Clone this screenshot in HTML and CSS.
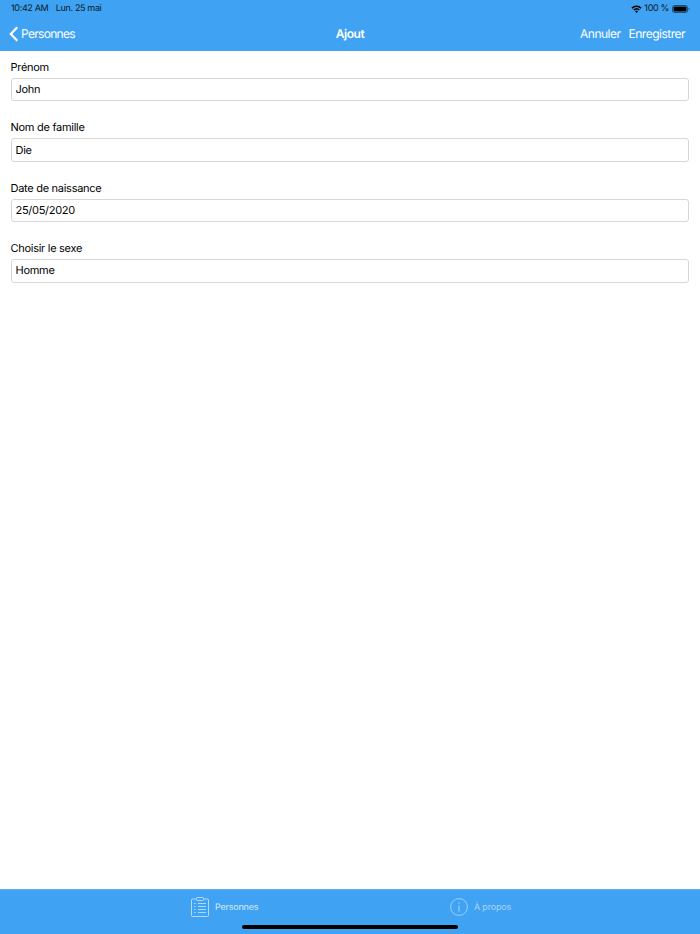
FILE: index.html
```html
<!DOCTYPE html>
<html lang="fr">
<head>
    <meta charset="UTF-8">
    <meta name="viewport" content="width=device-width, initial-scale=1.0">
    <title>Ajout</title>
    <link rel="stylesheet" href="styles.css">
</head>
<body>
    <div class="app">
        <header class="topbar">
            <div class="status-bar">
                <span class="status-time">10:42 AM</span>
                <span class="status-date">Lun. 25 mai</span>
                <span class="status-right">
                    <svg class="wifi" width="11" height="8" viewBox="0 0 11 8">
                        <path d="M0.3 2.7 A7.4 7.4 0 0 1 10.7 2.7 L9.6 3.8 A5.8 5.8 0 0 0 1.4 3.8 Z" fill="#000"/>
                        <path d="M2.2 4.5 A4.8 4.8 0 0 1 8.8 4.5 L7.7 5.6 A3.2 3.2 0 0 0 3.3 5.6 Z" fill="#000"/>
                        <path d="M4 6.3 A2.2 2.2 0 0 1 7 6.3 L5.5 7.9 Z" fill="#000"/>
                    </svg>
                    <span class="status-battery">100 %</span>
                    <svg class="battery" width="18" height="8" viewBox="0 0 18 8">
                        <rect x="0.5" y="0.5" width="15" height="7" rx="2" fill="none" stroke="#000" stroke-opacity="0.5"/>
                        <rect x="1.5" y="1.5" width="13" height="5" rx="1" fill="#000"/>
                        <path d="M16.5 2.8 C17.2 3 17.5 3.5 17.5 4 C17.5 4.5 17.2 5 16.5 5.2 Z" fill="#000" fill-opacity="0.5"/>
                    </svg>
                </span>
            </div>
            <nav class="navbar">
                <a class="nav-back">
                    <svg width="10" height="16" viewBox="0 0 10 16">
                        <path d="M8.3 1.3 L1.8 8 L8.3 14.7" fill="none" stroke="#fff" stroke-width="2.2"/>
                    </svg>
                    <span>Personnes</span>
                </a>
                <div class="nav-title">Ajout</div>
                <div class="nav-actions">
                    <a>Annuler</a>
                    <a>Enregistrer</a>
                </div>
            </nav>
        </header>

        <main class="form">
            <div class="field">
                <label for="prenom">Prénom</label>
                <input type="text" id="prenom" value="John">
            </div>
            <div class="field">
                <label for="nom">Nom de famille</label>
                <input type="text" id="nom" value="Die">
            </div>
            <div class="field">
                <label for="naissance">Date de naissance</label>
                <input type="text" id="naissance" value="25/05/2020">
            </div>
            <div class="field">
                <label for="sexe">Choisir le sexe</label>
                <input type="text" id="sexe" value="Homme">
            </div>
        </main>

        <footer class="tabbar">
            <a class="tab tab-active">
                <svg width="18" height="20" viewBox="0 0 18 20" fill="none" stroke="#cfe6fb" stroke-width="0.8">
                    <rect x="0.5" y="2" width="17" height="17.5" rx="1"/>
                    <rect x="5.5" y="0.5" width="7" height="3" rx="0.8" fill="#3fa2f3"/>
                    <path d="M3 6.5 L4.5 6.5 M7 6.5 L15 6.5 M3 9.5 L4.5 9.5 M7 9.5 L15 9.5 M3 12.5 L4.5 12.5 M7 12.5 L15 12.5 M3 15.5 L4.5 15.5 M7 15.5 L15 15.5"/>
                </svg>
                <span>Personnes</span>
            </a>
            <a class="tab tab-muted">
                <svg width="18" height="18" viewBox="0 0 18 18" fill="none" stroke="#a9d4f8" stroke-width="0.9">
                    <circle cx="9" cy="9" r="8.4"/>
                    <path d="M9 7.5 L9 13.5 M9 4.5 L9 5.7" stroke-width="1.1"/>
                </svg>
                <span>À propos</span>
            </a>
            <div class="home-indicator"></div>
        </footer>
    </div>
</body>
</html>
```

FILE: styles.css
```css
* {
    box-sizing: border-box;
}

body {
    margin: 0;
    font-family: Inter, "Liberation Sans", Arial, sans-serif;
    background-color: #fff;
    color: #000;
    text-rendering: geometricPrecision;
}

.app {
    display: flex;
    flex-direction: column;
    height: 934px;
}

.topbar {
    height: 51px;
    background-color: #3fa2f3;
}

.status-bar {
    display: flex;
    align-items: center;
    height: 16px;
    padding: 1px 10px 0 11px;
    font-size: 9px;
    letter-spacing: -0.35px;
    color: #0b1a26;
}

.status-date {
    margin-left: 7.5px;
}

.status-right {
    display: flex;
    align-items: center;
    gap: 3px;
    margin-left: auto;
}

.status-battery {
    margin-left: -1px;
}

.navbar {
    position: relative;
    display: flex;
    align-items: center;
    justify-content: space-between;
    height: 35px;
    padding: 0 15px 0 9px;
    font-size: 12px;
    letter-spacing: -0.5px;
    color: #fff;
}

.nav-back {
    display: flex;
    align-items: center;
    gap: 2px;
    letter-spacing: -0.7px;
}

/* title stays centred whatever the side buttons measure */
.nav-title {
    position: absolute;
    left: 0;
    right: 0;
    text-align: center;
    font-weight: 600;
}

.nav-actions {
    display: flex;
    gap: 8px;
}

.form {
    flex: 1;
    padding: 9px 11px 0 10.5px;
}

.field {
    height: 60.4px;
}

.field label {
    display: block;
    height: 18px;
    font-size: 11px;
    line-height: 15px;
    letter-spacing: -0.28px;
}

.field input {
    display: block;
    width: 100%;
    height: 23.4px;
    padding: 0 3.5px 1px 4px;
    border: 1px solid #d6d6d6;
    border-radius: 3px;
    background-color: #fff;
    font-family: inherit;
    font-size: 11px;
    letter-spacing: -0.28px;
    color: #000;
    text-rendering: geometricPrecision;
}

.tabbar {
    position: relative;
    display: flex;
    justify-content: center;
    height: 45px;
    padding-top: 7px;
    background-color: #3fa2f3;
    border-top: 1px solid #5db0f5;
}

.tab {
    display: flex;
    align-items: flex-start;
    gap: 6px;
    width: 260px;
    height: 20px;
    font-size: 9px;
    line-height: 22px;
    letter-spacing: -0.2px;
}

.tab-active {
    padding-left: 101px;
    color: #d6eafc;
}

.tab-muted {
    padding-left: 100px;
    color: #a9d4f8;
}

.tab-muted svg {
    margin-top: 1px;
}

.home-indicator {
    position: absolute;
    left: 242px;
    bottom: 5px;
    width: 216px;
    height: 4px;
    border-radius: 2px;
    background-color: #000;
}
```
